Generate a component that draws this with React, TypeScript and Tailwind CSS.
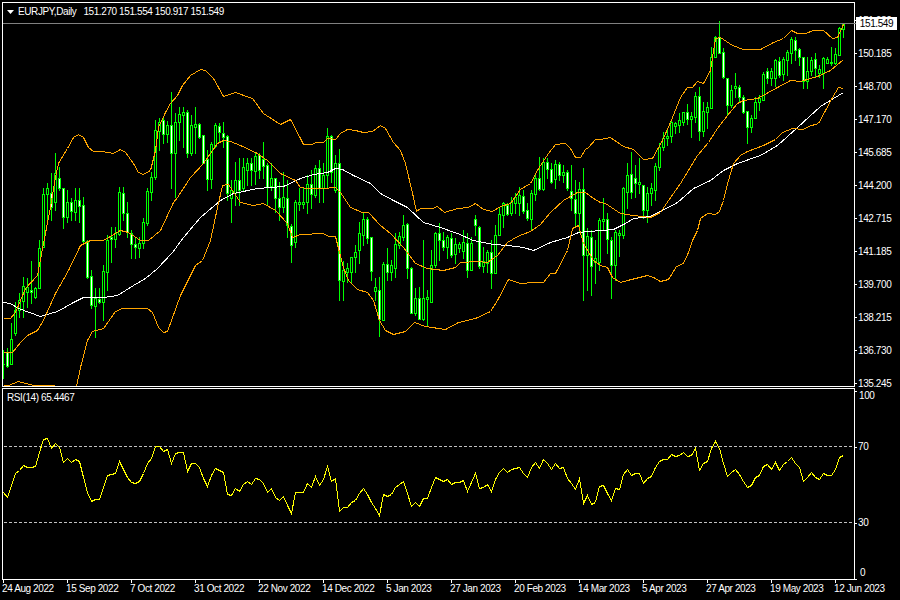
import React from "react";

// [body top, body bottom, high, low, bear] in page pixels, one per day
const candles: number[][] = [
  [364,364,350,378,0],[352,366,348,367,1],[339,364,323,364,0],[310,333,302,335,0],[300,310,293,317,0],
  [286,301,277,317,0],[287,292,278,307,0],[290,292,261,303,1],[288,297,287,298,0],[248,288,240,288,0],
  [194,247,188,247,0],[188,194,183,220,0],[193,207,173,220,1],[173,202,153,210,0],[178,188,167,190,1],
  [188,217,188,228,1],[202,217,190,222,0],[202,211,198,220,1],[200,212,188,220,0],[200,206,188,222,1],
  [205,241,197,243,1],[241,277,240,278,1],[276,305,270,308,1],[298,306,288,337,0],[299,302,288,303,1],
  [271,302,265,320,0],[240,272,235,290,0],[237,239,227,262,1],[233,239,227,247,0],[192,234,187,235,0],
  [193,213,187,220,1],[213,232,202,237,1],[233,244,230,258,1],[244,247,237,258,1],[243,248,237,257,0],
  [222,243,218,248,0],[191,223,188,225,0],[177,192,172,200,0],[130,177,120,179,0],[122,131,118,150,0],
  [120,134,117,143,1],[125,134,121,142,0],[125,153,92,188,1],[122,153,113,197,0],[114,122,107,140,0],
  [112,115,107,147,0],[112,153,110,157,1],[125,153,115,155,0],[124,127,107,153,0],[124,137,123,138,1],
  [135,163,135,163,1],[159,179,150,190,1],[144,179,142,188,0],[125,146,123,147,0],[126,132,123,142,1],
  [133,137,122,147,1],[136,193,135,200,1],[190,198,180,222,0],[180,193,162,205,0],[180,190,158,205,1],
  [167,188,158,190,0],[163,170,158,185,0],[163,170,158,185,1],[156,171,152,184,0],[155,170,153,178,1],
  [159,166,142,178,1],[165,187,163,204,1],[178,186,163,190,0],[178,198,178,212,1],[198,207,182,220,1],
  [197,207,172,212,0],[198,225,180,237,1],[226,245,224,262,1],[202,242,200,247,0],[202,204,188,210,0],
  [202,204,188,208,0],[184,202,175,213,0],[184,194,170,208,1],[168,195,165,197,0],[168,188,160,202,1],
  [175,188,163,202,0],[136,175,128,187,0],[136,172,135,182,1],[163,190,155,192,0],[163,280,149,300,1],
  [270,281,261,300,0],[268,272,263,282,0],[257,272,257,282,0],[252,257,245,272,0],[233,250,222,263,0],
  [219,235,213,245,0],[219,238,217,243,1],[237,271,237,280,1],[287,291,278,300,0],[290,319,277,336,1],
  [264,320,262,320,0],[264,272,248,280,1],[265,272,260,280,0],[244,268,233,277,0],[236,245,232,248,0],
  [225,237,215,240,0],[224,268,223,278,1],[268,313,267,313,1],[298,313,288,315,0],[298,319,287,319,1],
  [298,319,240,320,0],[297,299,290,325,0],[265,302,250,302,0],[233,265,232,267,0],[233,240,223,260,1],
  [240,247,232,250,1],[237,247,235,258,0],[238,255,233,257,1],[244,254,238,263,0],[244,248,242,252,0],
  [242,251,230,258,0],[243,270,233,277,1],[243,270,237,270,0],[219,225,215,235,1],[227,266,226,268,1],
  [261,266,247,272,0],[252,263,250,272,0],[252,273,240,288,1],[235,273,225,273,0],[214,235,207,235,0],
  [203,215,202,227,0],[205,214,203,215,1],[202,213,197,215,0],[197,203,193,213,0],[195,203,187,215,0],
  [196,211,190,213,1],[210,218,203,220,1],[193,219,190,230,0],[178,194,173,200,0],[178,189,157,190,1],
  [162,189,158,190,0],[162,169,158,178,1],[169,182,163,183,1],[164,179,160,188,0],[164,175,162,180,1],
  [172,175,165,182,0],[172,188,170,190,1],[191,198,165,210,1],[199,213,180,225,1],[189,213,182,232,0],
  [189,255,168,300,1],[236,255,228,290,0],[237,266,230,295,1],[258,262,240,283,0],[220,262,218,270,0],
  [219,221,198,230,0],[219,239,213,253,1],[240,265,237,298,1],[232,265,230,280,0],[233,235,230,256,0],
  [188,235,187,238,0],[175,192,163,208,0],[174,192,152,198,1],[178,183,165,197,1],[182,184,158,193,0],
  [185,210,185,218,1],[193,210,187,222,0],[188,193,183,205,0],[166,190,163,200,0],[147,167,143,170,0],
  [138,147,132,150,0],[136,138,130,145,0],[122,136,120,142,0],[123,126,122,133,0],[120,125,113,132,0],
  [112,122,112,125,0],[112,119,104,124,1],[116,119,112,137,0],[96,117,92,122,0],[96,131,87,140,1],
  [111,131,102,136,0],[107,112,102,128,0],[57,108,47,108,0],[37,57,36,57,0],[37,53,21,53,1],
  [52,77,48,78,1],[78,105,78,115,1],[90,105,85,107,0],[86,88,73,97,0],[87,97,85,102,1],
  [97,112,95,113,1],[111,127,111,143,1],[118,127,115,132,0],[102,118,97,118,0],[98,102,95,110,0],
  [74,100,72,100,0],[71,78,68,83,1],[71,78,68,85,0],[60,78,59,86,0],[61,75,57,77,1],
  [59,74,57,80,0],[52,60,50,75,0],[39,53,37,63,0],[40,50,37,60,1],[49,57,48,65,1],
  [57,81,57,88,1],[71,81,57,88,0],[60,71,57,75,0],[59,68,53,77,1],[69,73,65,77,0],
  [58,73,57,88,0],[59,63,57,63,0],[62,63,47,65,0],[54,63,48,64,0],[28,55,27,55,0],[23,29,23,37,0],
];

const upperBand =
  "3,318 10,318 15,312 25,288 37,275 43,243 50,207 55,177 58,163 67,148 73,137 78,134 83,137 88,147 93,151 102,151 113,153 120,149 125,152 133,163 138,172 143,174 150,170 155,150 158,127 165,112 170,103 177,95 182,85 190,75 200,69 205,70 213,78 223,96 235,92 252,98 263,113 280,124 290,119 300,138 303,144 312,144 315,142 323,142 327,138 335,139 340,133 347,129 355,130 363,132 372,131 380,125 385,128 393,142 400,150 405,163 413,197 416,211 420,208 432,208 437,206 444,212 457,208 468,207 475,203 483,209 492,211 500,206 510,203 520,189 530,183 538,168 548,153 555,144 565,143 570,148 575,157 580,157 585,149 588,147 595,139 600,139 610,137 623,146 633,149 643,159 652,158 662,140 670,122 680,97 687,87 692,87 697,81 703,83 710,70 715,38 720,37 732,45 743,49 760,49 773,42 783,38 791,30 797,33 805,33 813,30 823,30 832,38 837,37 843,24";
const middleBand =
  "3,352 12,352 20,342 27,335 37,330 43,320 55,293 68,270 80,245 90,240 103,240 120,230 128,232 140,240 148,240 160,230 173,202 177,197 190,177 203,163 217,143 223,140 230,141 240,145 257,153 267,160 280,173 295,180 300,187 307,188 323,188 335,187 340,192 350,207 362,212 368,212 380,225 390,233 403,247 415,263 427,268 443,270 455,267 460,262 477,261 487,262 497,255 507,242 517,236 530,231 540,224 550,212 563,200 577,192 585,192 593,198 600,202 605,203 620,213 633,215 650,217 660,212 668,200 680,183 697,155 708,142 717,128 727,115 737,103 743,100 757,98 777,87 790,80 800,81 817,76 830,70 843,59";
const lowerBand =
  "3,385 8,385 18,381 33,385 76,386 80,367 87,340 92,331 103,328 115,311 122,308 133,308 147,308 152,312 158,327 163,332 167,331 180,295 195,265 202,260 210,240 217,207 222,185 228,184 240,202 253,205 263,203 275,210 287,223 292,237 300,234 323,233 328,236 335,236 338,248 343,267 348,280 357,289 367,292 373,300 379,320 385,330 393,334 405,331 414,322 425,326 445,329 458,322 475,318 490,311 497,300 508,279 520,283 533,282 543,282 550,273 555,273 567,250 572,228 578,225 583,243 593,260 600,265 607,267 612,277 620,282 627,280 647,275 653,277 660,281 668,279 676,266 683,263 688,252 692,240 697,230 700,218 707,213 715,214 719,211 723,200 728,180 733,163 740,155 747,151 763,145 775,139 782,132 792,128 803,129 808,126 818,123 825,110 832,97 838,87 843,88";
const whiteMa =
  "3,302 10,303 18,308 40,316 57,311 73,302 83,297 103,297 117,295 133,285 145,278 157,268 172,252 183,237 200,217 220,200 233,193 257,188 283,186 300,178 313,174 327,172 335,168 342,169 353,175 370,183 380,193 393,200 407,207 423,222 440,227 457,233 473,240 493,244 507,245 523,247 533,250 550,242 567,237 578,232 600,230 613,229 625,223 633,218 650,216 660,211 677,202 693,188 710,180 723,170 737,163 760,155 777,145 797,127 820,106 833,98 843,92";

// rsi readings, in thirds of a pixel below y=380
const rsiRaw = [
  337,352,315,280,270,256,262,262,258,215,178,175,205,188,200,246,235,247,238,243,290,335,363,358,357,320,286,282,280,242,268,290,305,310,303,280,248,235,198,197,213,208,250,220,217,217,272,250,250,262,295,318,285,265,270,275,343,345,325,333,312,304,312,295,297,310,337,325,350,360,347,375,400,335,335,
  335,310,322,287,315,298,257,303,293,393,382,382,367,360,340,325,343,367,385,405,343,348,342,322,312,302,340,378,365,378,355,353,322,290,297,302,296,312,305,305,300,333,305,280,325,322,313,333,298,275,265,277,266,265,260,280,292,262,247,265,238,250,268,250,265,262,293,310,328,293,370,345,372,367,317,
  315,338,360,325,327,282,268,285,278,278,308,295,288,262,243,238,238,222,229,226,217,228,226,205,270,250,242,203,184,203,250,289,275,268,283,302,322,315,290,285,257,253,268,247,270,252,243,230,250,262,303,292,275,290,298,278,284,284,268,232,226,
];
const rsiPoints = rsiRaw.map((v, i) => `${3 + 4 * i},${Math.round(380 + v / 3)}`).join(" ");

const mainPrices = ["151.680","150.185","148.700","147.170","145.685","144.200","142.715","141.185","139.700","138.215","136.730","135.245"];
const dates = ["24 Aug 2022","15 Sep 2022","7 Oct 2022","31 Oct 2022","22 Nov 2022","14 Dec 2022","5 Jan 2023","27 Jan 2023","20 Feb 2023","14 Mar 2023","5 Apr 2023","27 Apr 2023","19 May 2023","12 Jun 2023"];

const MainChart = () => (
  <svg width="851" height="383" viewBox="3 3 851 383" shapeRendering="crispEdges">
    {candles.map(([top, bottom, high, low, bear], i) => {
      const x = 3 + 4 * i;
      return (
        <g key={i}>
          <rect x={x} y={high} width="1" height={low - high + 1} fill="#00ff00" />
          <rect x={x - 1} y={top} width="3" height={bottom - top + 1} fill="#00ff00" />
          {bottom - top >= 2 && (
            <rect x={x} y={top + 1} width="1" height={bottom - top - 1} fill={bear ? "#ffffff" : "#000000"} />
          )}
        </g>
      );
    })}
    <g fill="none" strokeWidth="1" transform="translate(.5 .5)">
      <polyline points={whiteMa} stroke="#ffffff" />
      <polyline points={upperBand} stroke="#ffa500" />
      <polyline points={middleBand} stroke="#ffa500" />
      <polyline points={lowerBand} stroke="#ffa500" />
    </g>
  </svg>
);

const RsiChart = () => (
  <svg width="851" height="190" viewBox="3 389 851 190" shapeRendering="crispEdges">
    <g fill="none" transform="translate(.5 .5)">
      <line x1="3" x2="854" y1="446" y2="446" stroke="#c0c0c0" strokeDasharray="3 2" />
      <line x1="3" x2="854" y1="522" y2="522" stroke="#c0c0c0" strokeDasharray="3 2" />
      <polyline points={rsiPoints} stroke="#ffff00" />
    </g>
  </svg>
);

const App = () => {
  return (
    <div className="relative w-[900px] h-[600px] overflow-hidden bg-black pl-[2px] pt-[2px] text-white font-['Liberation_Sans',sans-serif] text-[10px] leading-none tracking-[-0.4px]">
      {/* Price pane */}
      <div className="flex h-[385px]">
        <div className="relative w-[853px] border border-white">
          <MainChart />
          <div className="absolute left-[4px] top-[4px] flex items-center">
            <svg width="7" height="4" viewBox="0 0 7 4" className="mr-[4px]">
              <polygon points="0,0 7,0 3.5,4" fill="#ffffff" />
            </svg>
            <span>EURJPY,Daily</span>
            <span className="ml-[7px]">151.270 151.554 150.917 151.549</span>
          </div>
          <div className="absolute left-0 top-[20px] h-px w-[853px] bg-[#808080]" />
        </div>
        <div className="relative flex flex-col pt-[2px]">
          {mainPrices.map((p) => (
            <div key={p} className="flex h-[33px] shrink-0 items-center">
              <div className="h-px w-[2px] bg-white" />
              <span className="ml-[1px]">{p}</span>
            </div>
          ))}
          <div className="absolute left-[1px] top-[15px] flex h-[13px] w-[41px] items-center justify-center bg-white text-black">
            151.549
          </div>
        </div>
      </div>

      {/* RSI pane */}
      <div className="mt-px flex h-[192px]">
        <div className="relative w-[853px] border border-white">
          <RsiChart />
          <div className="absolute left-[4px] top-[4px]">RSI(14) 65.4467</div>
        </div>
        <div className="flex flex-col">
          <div className="mt-[3px] h-px w-[2px] bg-white" />
          <div className="-mt-px flex h-[10px] items-center pl-[4px]">100</div>
          <div className="mt-[41px] flex h-[10px] items-center">
            <div className="h-px w-[2px] bg-white" />
            <span className="ml-[1px]">70</span>
          </div>
          <div className="mt-[66px] flex h-[10px] items-center">
            <div className="h-px w-[2px] bg-white" />
            <span className="ml-[1px]">30</span>
          </div>
          <div className="mt-[40px] flex h-[10px] items-center pl-[5px]">0</div>
          <div className="mt-px h-px w-[2px] bg-white" />
        </div>
      </div>

      {/* Time axis */}
      <div className="flex">
        {dates.map((d) => (
          <div key={d} className="w-[64px] shrink-0 whitespace-nowrap">
            <div className="ml-px h-[3px] w-px bg-white" />
            <div className="mt-[1px]">{d}</div>
          </div>
        ))}
      </div>
    </div>
  );
};

export default App;
